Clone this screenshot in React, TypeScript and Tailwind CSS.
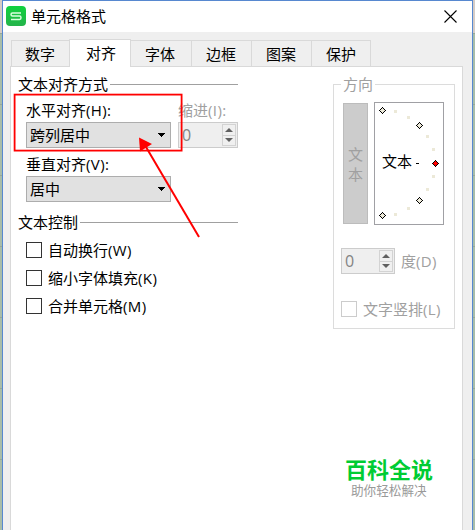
import type { ReactNode } from "react";

const tabs = [
  { label: "数字", cls: "w-[58px] pl-[13px]" },
  { label: "对齐", cls: "w-[62px] pl-[16px]" },
  { label: "字体", cls: "w-[60px] pl-[14px]" },
  { label: "边框", cls: "w-[60px] pl-[14px]" },
  { label: "图案", cls: "w-[60px] pl-[14px]" },
  { label: "保护", cls: "w-[60px] pl-[14px]" },
];

function Heading({ children }: { children: ReactNode }) {
  return (
    <div className="flex h-5 w-[220px] items-center gap-[2px]">
      <span className="-mt-[2px]">{children}</span>
      <span className="-mt-px h-px flex-1 bg-[#a0a0a0]" />
    </div>
  );
}

function Label({ text, hotkey }: { text: string; hotkey: string }) {
  return (
    <span>
      {text}
      <span className="tracking-[0.4px]">{hotkey}</span>
    </span>
  );
}

function Select({ value }: { value: string }) {
  return (
    <div className="flex h-[26px] w-[145px] items-center justify-between border border-[#adadad] bg-[#e1e1e1] pr-[4px] pl-[3px]">
      <span>{value}</span>
      <svg width="9" height="5" viewBox="0 0 9 5" className="text-black" shapeRendering="crispEdges">
        <path d="M1 0h7v1h-1v1h-1v1h-1v1h-1v-1h-1v-1h-1v-1h-1z" fill="currentColor" />
      </svg>
    </div>
  );
}

function Spinner({ wide }: { wide?: boolean }) {
  return (
    <div
      className={`flex h-[26px] items-center justify-between border border-[#cccccc] bg-[#efefef] pr-px pl-[3px] text-[#838383] ${wide ? "w-[60px]" : "w-[54px]"}`}
    >
      <span className="text-base">0</span>
      <div className="flex h-[22px] w-[14px] flex-col border border-[#d3d3d3] bg-[#f0f0f0]">
        <div className="flex flex-1 items-center justify-center border-b border-[#d3d3d3]">
          <svg width="8" height="4" viewBox="0 0 8 4">
            <path d="M4 0 8 4H0z" fill="#606060" />
          </svg>
        </div>
        <div className="flex flex-1 items-center justify-center">
          <svg width="8" height="4" viewBox="0 0 8 4">
            <path d="M0 0h8L4 4z" fill="#606060" />
          </svg>
        </div>
      </div>
    </div>
  );
}

function Check({ label, hotkey, disabled }: { label: string; hotkey: string; disabled?: boolean }) {
  return (
    <div className="flex h-5 items-center gap-[6px]">
      <span className={`size-4 shrink-0 border bg-white ${disabled ? "border-[#cccccc]" : "border-[#333333]"}`} />
      <Label text={label} hotkey={hotkey} />
    </div>
  );
}

const dots = [
  [395, 111], [408, 117], [427, 136], [433, 149], [433, 176], [427, 189], [408, 208], [395, 214],
];
const handles = [[382, 110], [419, 125], [435, 163], [419, 200], [382, 215]];

function Dial() {
  return (
    <div className="relative flex h-[123px] w-[70px] items-center border border-[#a0a0a4] bg-white pl-[7px] text-black">
      <svg className="absolute -top-px -left-px" width="70" height="123" viewBox="374 102 70 123" shapeRendering="crispEdges">
        {dots.map(([x, y]) => (
          <rect key={`${x}-${y}`} x={x - 1} y={y - 1} width="3" height="3" fill="#ece9d8" />
        ))}
        {handles.map(([x, y]) => (
          <g key={`${x}-${y}`} transform={`translate(${x} ${y})`}>
            <path
              d="M0-3h1v1h1v1h1v1h1v1h-1v1h-1v1h-1v1h-1v-1h-1v-1h-1v-1h-1v-1h1v-1h1v-1h1z"
              fill="#000"
            />
            <path d="M0-2h1v1h1v1h1v1h-1v1h-1v1h-1v-1h-1v-1h-1v-1h1v-1h1z" fill={x === 435 ? "#ff0000" : "#ece9d8"} />
          </g>
        ))}
      </svg>
      <span className="-mt-[5px]">文本</span>
      <span className="ml-[4px] h-px w-[3px] bg-black" />
    </div>
  );
}

export default function App() {
  return (
    <div className="relative h-[530px] w-[475px] overflow-hidden bg-[linear-gradient(#d5ccc6_33px,transparent_33px),repeating-linear-gradient(#a8bda9_0_33px,#98a898_33px_34px,#a8bda9_34px_71px)] pr-[2px] pl-[2px] font-['Open_Sans','Noto_Sans_CJK_SC',sans-serif] text-[15px] leading-5 whitespace-nowrap text-black">
      <div className="flex h-full flex-col border border-b-0 border-[#5788d0] bg-[#efefef]">
        <header className="flex h-[31px] shrink-0 items-center bg-white pr-[15px] pl-[3px]">
          <svg width="20" height="20" viewBox="0 0 20 20" className="-mt-px">
            <defs>
              <linearGradient id="logo" x2="0" y2="1">
                <stop stopColor="#10d13e" />
                <stop offset="1" stopColor="#25b34b" />
              </linearGradient>
            </defs>
            <rect width="20" height="20" rx="4" fill="url(#logo)" />
            <path d="M15 7H6.5Q5 7 5 8.5T6.500 10H13.500Q15 10 15 11.700T13.500 13.500H5" fill="none" stroke="#d9ffdf" strokeWidth="1.5" />
          </svg>
          <span className="-mt-px ml-[5px]">单元格格式</span>
          <svg className="ml-auto" width="13" height="13" viewBox="0 0 13 13">
            <path d="m.5.5 12 12m0-12-12 12" stroke="#000" strokeWidth="1.1" />
          </svg>
        </header>
        <nav className="flex h-[34px] shrink-0 items-end pl-[8px]">
          {tabs.map((tab, i) =>
            i === 1 ? (
              <div key={tab.label} className={`relative -mb-px h-[28px] border border-b-0 border-[#d9d9d9] bg-white pt-[3px] ${tab.cls}`}>
                {tab.label}
              </div>
            ) : (
              <div
                key={tab.label}
                className={`h-[26px] border-t border-[#d9d9d9] pt-[3px] ${tab.cls} ${i === 0 || i > 2 ? "border-l" : ""} ${i === 5 ? "border-r" : ""}`}
              >
                {tab.label}
              </div>
            ),
          )}
        </nav>
        <main className="mr-[9px] ml-[7px] flex flex-1 justify-between border border-b-0 border-[#d9d9d9] bg-white pr-[7px] pl-[7px]">
          <section className="pt-[8px]">
            <Heading>文本对齐方式</Heading>
            <div className="mt-[5px] ml-[8px] flex gap-[7px]">
              <div>
                <div className="mb-[2px]">
                  <Label text="水平对齐" hotkey="(H):" />
                </div>
                <Select value="跨列居中" />
              </div>
              <div className="text-[#a0a0a0]">
                <div className="mb-[2px]">
                  <Label text="缩进" hotkey="(I):" />
                </div>
                <Spinner wide />
              </div>
            </div>
            <div className="mt-[6px] ml-[8px]">
              <div className="mb-[2px]">
                <Label text="垂直对齐" hotkey="(V):" />
              </div>
              <Select value="居中" />
            </div>
            <div className="mt-[11px]">
              <Heading>文本控制</Heading>
            </div>
            <div className="mt-[7px] ml-[8px] flex flex-col gap-2">
              <Check label="自动换行" hotkey="(W)" />
              <Check label="缩小字体填充" hotkey="(K)" />
              <Check label="合并单元格" hotkey="(M)" />
            </div>
          </section>
          <aside className="flex w-[122px] flex-col pt-[7px] text-[#a0a0a0]">
            <fieldset className="h-[255px] w-[122px] border border-[#dcdcdc] pl-[7px]">
              <legend className="h-5 px-[2px]">方向</legend>
              <div className="mt-[8px] ml-[2px] flex gap-[6px]">
                <div className="mt-px flex h-[121px] w-[25px] flex-col items-center justify-center border border-[#bcbcbc] bg-[#cccccc]">
                  <span>文</span>
                  <span>本</span>
                </div>
                <Dial />
              </div>
              <div className="mt-[23px] flex items-center gap-[6px]">
                <Spinner />
                <Label text="度" hotkey="(D)" />
              </div>
              <div className="mt-[25px]">
                <Check label="文字竖排" hotkey="(L)" disabled />
              </div>
            </fieldset>
            <div className="mt-[130px] ml-[12px] font-['Liberation_Sans','Noto_Sans_CJK_SC',sans-serif] text-[22px] leading-6 font-bold text-[#00cc33]">
              百科全说
            </div>
            <div className="ml-[18px] font-['Liberation_Sans','Noto_Sans_CJK_SC',sans-serif] text-[12.6px] leading-4 text-[#999999]">
              助你轻松解决
            </div>
          </aside>
        </main>
      </div>
      <svg className="pointer-events-none absolute top-0 left-0" width="475" height="530" viewBox="0 0 475 530">
        <rect x="14.6" y="94.6" width="167" height="56" fill="none" stroke="#ff0000" strokeWidth="1.8" />
        <path d="M199 237 146 147" stroke="#ff0000" strokeWidth="2" />
        <path d="M139 137.500 152 144 140 151.500z" fill="#ff0000" />
      </svg>
    </div>
  );
}
